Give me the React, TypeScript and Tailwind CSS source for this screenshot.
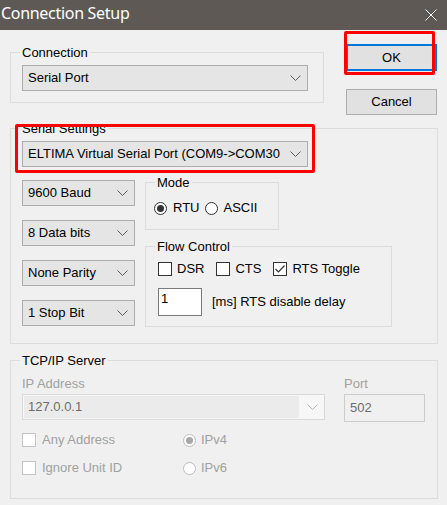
import type { ReactNode } from "react";

function Group({
  label,
  className,
  children,
}: {
  label: string;
  className: string;
  children: ReactNode;
}) {
  return (
    <fieldset className={`border border-[#dcdcdc] ${className}`}>
      <legend className="ml-[9px] px-[2px] leading-[16px]">
        <span className="relative top-[1px]">{label}</span>
      </legend>
      {children}
    </fieldset>
  );
}

function Chevron({ color = "#5a5a5a" }: { color?: string }) {
  return (
    <svg width="11" height="6" viewBox="0 0 11 6" fill="none">
      <path d="M0.5 0.5 L5.5 5.5 L10.5 0.5" stroke={color} strokeWidth="1" />
    </svg>
  );
}

function Combo({ value, className }: { value: string; className: string }) {
  return (
    <div
      className={`flex h-[26px] items-center border border-[#adadad] bg-[#e5e5e5] pl-[5px] pr-[6px] ${className}`}
    >
      <span className="flex-1 overflow-hidden whitespace-nowrap">{value}</span>
      <Chevron />
    </div>
  );
}

function Check({ checked = false, disabled = false }: { checked?: boolean; disabled?: boolean }) {
  return (
    <span
      className={`flex h-[14px] w-[14px] shrink-0 items-center justify-center border bg-white ${
        disabled ? "border-[#c4c4c4]" : "border-[#333333]"
      }`}
    >
      {checked && (
        <svg width="12" height="12" viewBox="0 0 12 12" fill="none">
          <path d="M1.5 6 L4.5 9 L10.5 2.5" stroke="#333333" strokeWidth="1.2" />
        </svg>
      )}
    </span>
  );
}

function Radio({ checked = false, disabled = false }: { checked?: boolean; disabled?: boolean }) {
  return (
    <span
      className={`flex h-[13px] w-[13px] shrink-0 items-center justify-center rounded-full border bg-white ${
        disabled ? "border-[#bcbcbc]" : "border-[#333333]"
      }`}
    >
      {checked && (
        <span
          className={`h-[7px] w-[7px] rounded-full ${disabled ? "bg-[#a8a8a8]" : "bg-[#333333]"}`}
        />
      )}
    </span>
  );
}

export default function App() {
  return (
    <div className="relative h-[505px] w-[447px] overflow-hidden bg-[#f0f0f0] font-['Liberation_Sans',Arial,sans-serif] text-[13px] leading-[16px] text-black">
      {/* title bar */}
      <div className="flex h-[30px] items-start justify-between bg-[#5e5955] pl-[1px] pr-[10px] text-white">
        <span className="pt-[3px] font-['Noto_Sans',sans-serif] text-[16px] leading-[20px] tracking-[-0.3px]">
          Connection Setup
        </span>
        <svg className="mt-[9px]" width="12" height="12" viewBox="0 0 12 12" fill="none">
          <path d="M0.5 0.5 L11.5 11.5 M11.5 0.5 L0.5 11.5" stroke="#ffffff" strokeWidth="1" />
        </svg>
      </div>

      <div className="flex items-start pl-[10px] pt-[14px]">
        <Group label="Connection" className="w-[314px]">
          <div className="pb-[11px] pl-[11px] pt-[5px]">
            <Combo value="Serial Port" className="w-[286px]" />
          </div>
        </Group>
        <div className="ml-[22px] flex flex-col gap-[18px]">
          <button className="h-[27px] w-[91px] border-2 border-[#0078d7] bg-[#e1e1e1] leading-[16px]">
            OK
          </button>
          <button className="h-[26px] w-[91px] border border-[#adadad] bg-[#e1e1e1] leading-[16px]">
            Cancel
          </button>
        </div>
      </div>

      <Group label="Serial Settings" className="ml-[10px] mt-[5px] w-[428px]">
        <div className="pb-[16px] pl-[11px] pt-[5px]">
          <Combo value="ELTIMA Virtual Serial Port (COM9->COM30" className="w-[286px]" />
          <div className="mt-[7px] flex gap-[10px]">
            <div className="flex flex-col gap-[14px] pt-[6px]">
              <Combo value="9600 Baud" className="w-[113px]" />
              <Combo value="8 Data bits" className="w-[113px]" />
              <Combo value="None Parity" className="w-[113px]" />
              <Combo value="1 Stop Bit" className="w-[113px]" />
            </div>
            <div className="flex flex-col gap-[8px]">
              <Group label="Mode" className="w-[134px]">
                <div className="mb-[13px] mt-[10px] flex h-[16px] items-center gap-[6px] pl-[8px]">
                  <label className="flex items-center gap-[6px]">
                    <Radio checked />
                    RTU
                  </label>
                  <label className="flex items-center gap-[5px]">
                    <Radio />
                    ASCII
                  </label>
                </div>
              </Group>
              <Group label="Flow Control" className="w-[247px]">
                <div className="pb-[10px] pl-[12px] pt-[7px]">
                  <div className="flex h-[16px] items-center gap-[12px]">
                    <label className="flex items-center gap-[5px]">
                      <Check />
                      DSR
                    </label>
                    <label className="flex items-center gap-[5px]">
                      <Check />
                      CTS
                    </label>
                    <label className="flex items-center gap-[5px]">
                      <Check checked />
                      RTS Toggle
                    </label>
                  </div>
                  <div className="mt-[11px] flex items-center gap-[10px]">
                    <div className="h-[28px] w-[44px] border border-[#7a7a7a] bg-white pl-[2px] pt-[2px]">
                      1
                    </div>
                    <span>[ms] RTS disable delay</span>
                  </div>
                </div>
              </Group>
            </div>
          </div>
        </div>
      </Group>

      <Group label="TCP/IP Server" className="ml-[10px] mt-[8px] w-[428px]">
        <div className="pb-[22px] pl-[11px]">
          <div className="flex">
            <div className="w-[303px] pt-[8px]">
              <div className="text-[#a0a0a0]">IP Address</div>
              <div className="mt-[2px] flex h-[26px] border border-[#d9d9d9] bg-[#f7f7f7]">
                <div className="m-[1px] flex flex-1 items-center bg-[#ebebeb] pl-[4px] text-[#6d6d6d]">
                  127.0.0.1
                </div>
                <div className="flex w-[24px] items-center justify-center">
                  <Chevron color="#b4b4b4" />
                </div>
              </div>
            </div>
            <div className="ml-[19px] pt-[8px]">
              <div className="text-[#a0a0a0]">Port</div>
              <div className="mt-[2px] h-[28px] w-[81px] border border-[#cccccc] bg-[#f0f0f0] pl-[5px] pt-[5px] text-[#6d6d6d]">
                502
              </div>
            </div>
          </div>
          <div className="mt-[10px] grid grid-cols-[161px_1fr] gap-y-[12px] text-[#a0a0a0]">
            <label className="flex h-[16px] items-center gap-[6px]">
              <Check disabled />
              Any Address
            </label>
            <label className="flex h-[16px] items-center gap-[5px]">
              <Radio checked disabled />
              IPv4
            </label>
            <label className="flex h-[16px] items-center gap-[6px]">
              <Check disabled />
              Ignore Unit ID
            </label>
            <label className="flex h-[16px] items-center gap-[5px]">
              <Radio disabled />
              IPv6
            </label>
          </div>
        </div>
      </Group>

      {/* red annotation boxes */}
      <div className="absolute left-[344px] top-[31px] h-[44px] w-[91px] rounded-[2px] border-[3px] border-[#ff0000]" />
      <div className="absolute left-[15px] top-[124px] h-[49px] w-[300px] rounded-[2px] border-[3px] border-[#ff0000]" />
    </div>
  );
}
